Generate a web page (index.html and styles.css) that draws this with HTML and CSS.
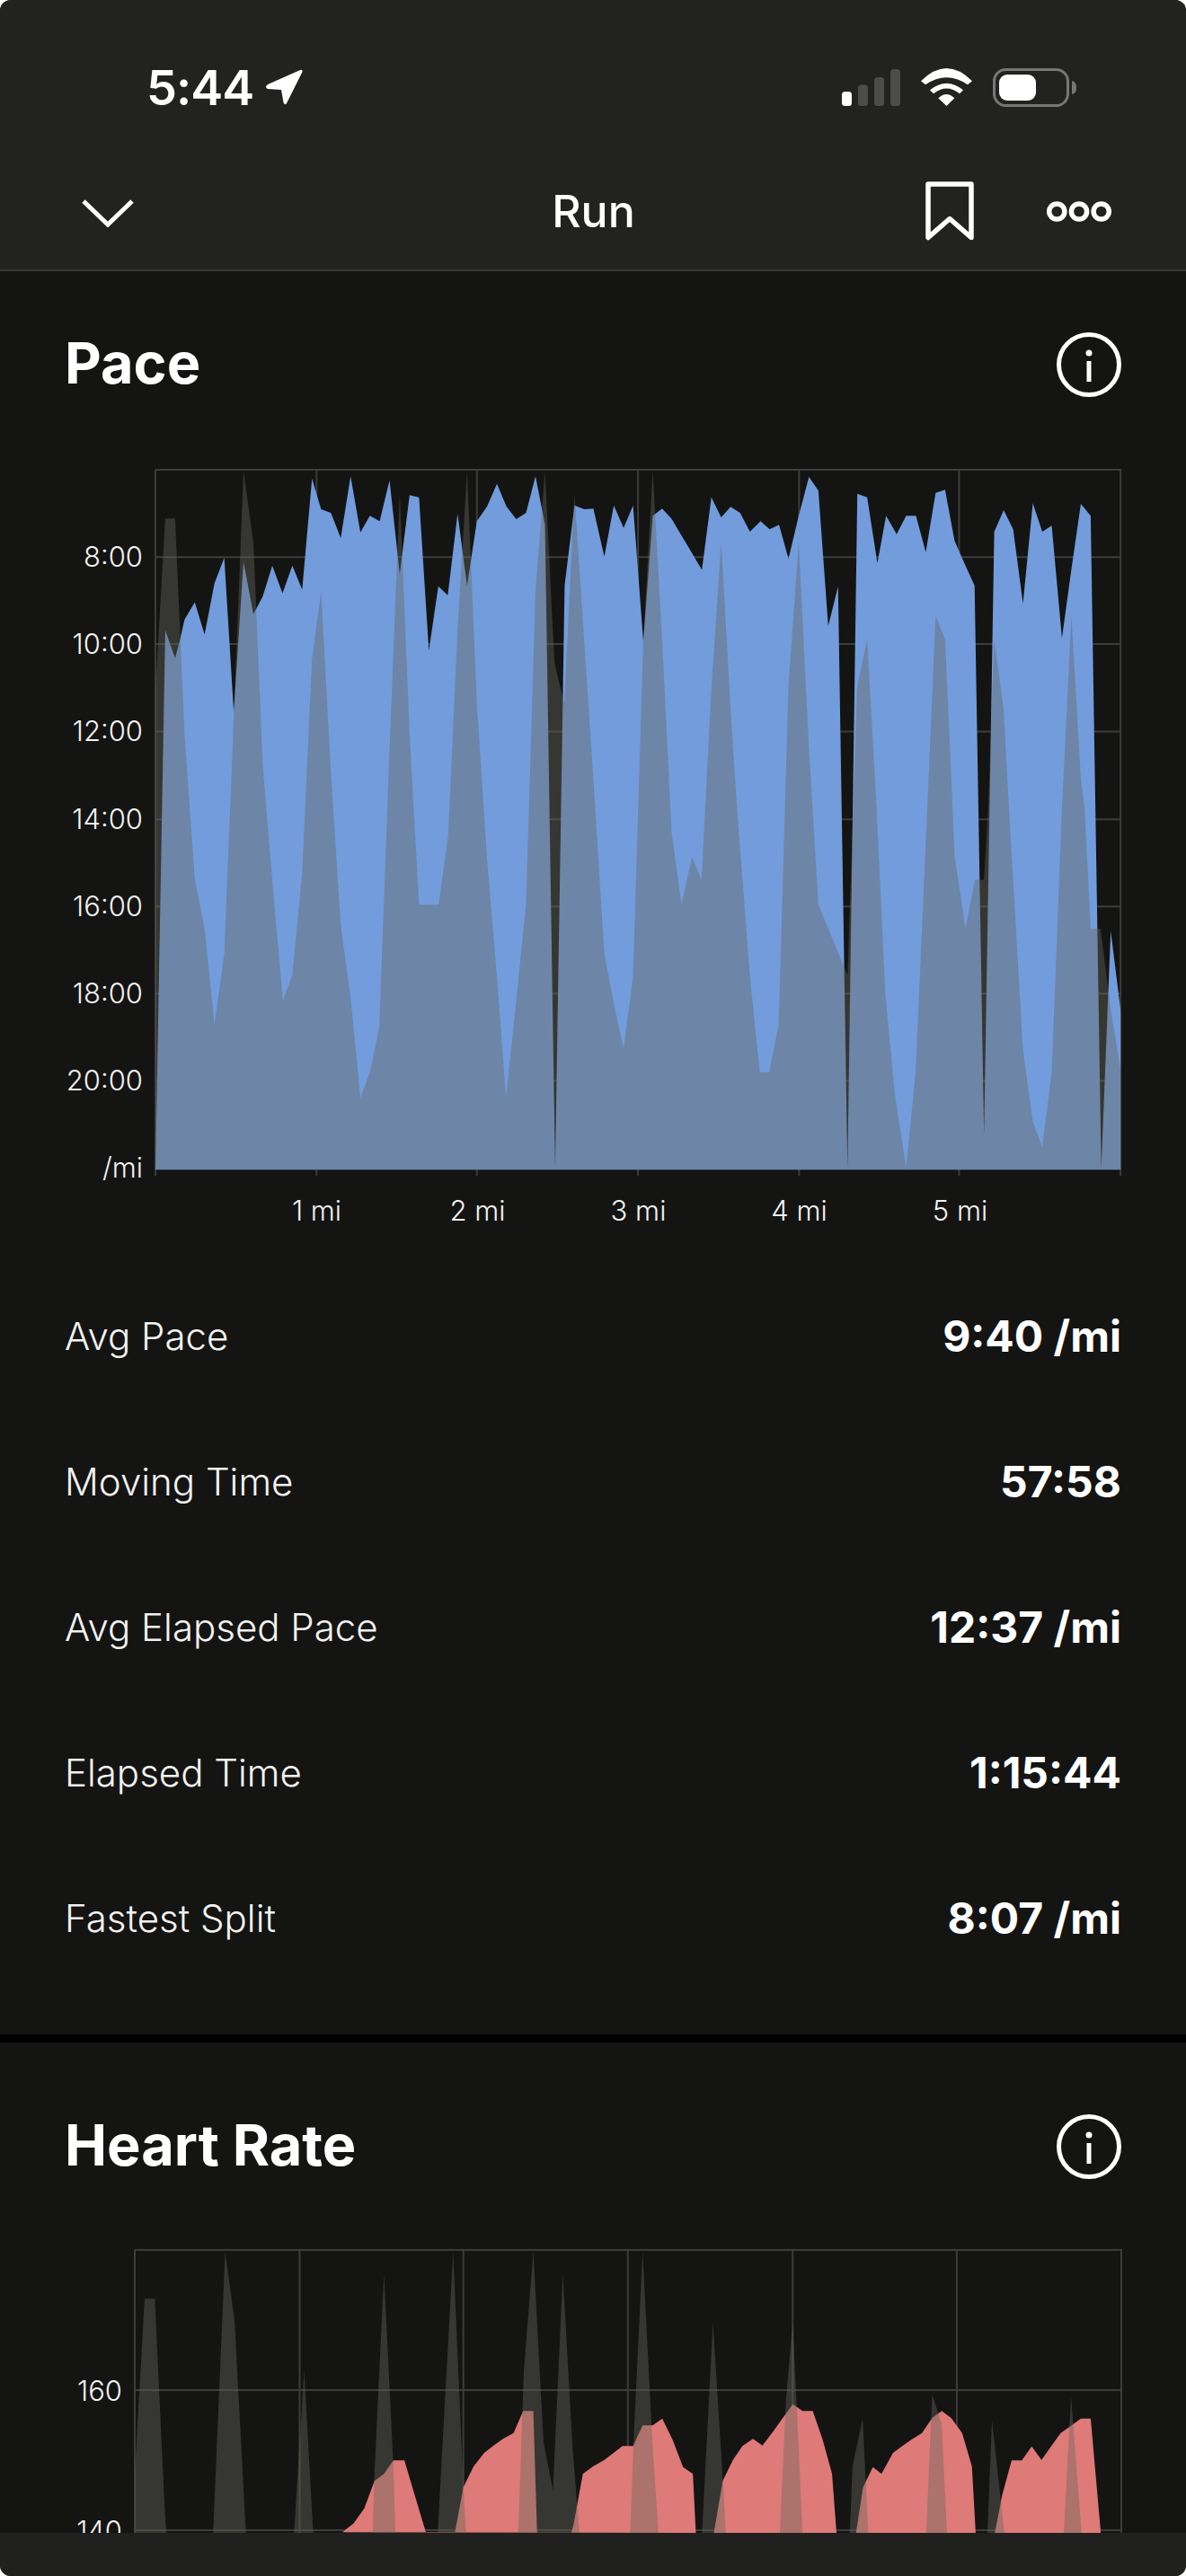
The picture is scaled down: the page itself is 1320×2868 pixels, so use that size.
FILE: index.html
```html
<!DOCTYPE html>
<html>
<head>
    <title>Run</title>
    <link rel="stylesheet" href="styles.css">
</head>
<body>
<div class="screen">
    <header class="top">
        <div class="status">
            <span class="clock">5:44</span>
            <svg class="arrow" viewBox="0 0 42 40"><path d="M39 1 Q42 0 41.500 3 L24 38 Q22 41 20.500 37 L18 23 L3 22 Q-1 20 3 17 Z" fill="#fff"/></svg>
            <span class="grow"></span>
            <svg class="signal" viewBox="0 0 65 41">
                <rect x="0" y="25" width="11" height="16" rx="3.500" fill="#fff"/>
                <rect x="18" y="17.500" width="11" height="23.500" rx="3.500" fill="#4c4c4a"/>
                <rect x="36" y="9" width="11" height="32" rx="3.500" fill="#4c4c4a"/>
                <rect x="54" y="0" width="11" height="41" rx="3.500" fill="#4c4c4a"/>
            </svg>
            <svg class="wifi" viewBox="0 0 57 42">
                <path d="M0 14.300 Q28.500 -14.300 57 14.300 L52 18.300 Q28.500 2.300 5 18.300 Z" fill="#fff"/>
                <path d="M10 24.300 Q28.500 9.100 47 24.300 L43 28.300 Q28.500 16.700 14 28.300 Z" fill="#fff"/>
                <path d="M19.300 33.300 Q28.500 24.700 37.300 33.300 L28.500 42 Z" fill="#fff"/>
            </svg>
            <svg class="battery" viewBox="0 0 93 43">
                <rect x="1.500" y="1.500" width="82" height="40" rx="13" fill="none" stroke="#777" stroke-width="3"/>
                <rect x="7" y="7" width="41" height="29" rx="9" fill="#fff"/>
                <path d="M88 14 C92 15 93 18 93 21.500 C93 25 92 28 88 29 Z" fill="#777"/>
            </svg>
        </div>
        <nav class="nav">
            <svg class="chevron" viewBox="0 0 58 32"><path d="M2 3 L29 29 L56 3" fill="none" stroke="#fff" stroke-width="5"/></svg>
            <div class="nav-title">Run</div>
            <div class="nav-actions">
                <svg class="bookmark" viewBox="0 0 54 66"><path d="M3 3 H51 V62.500 L27 41.500 L3 62.500 Z" fill="none" stroke="#fff" stroke-width="5.500" stroke-linejoin="round"/></svg>
                <svg class="dots" viewBox="0 0 72 23">
                    <circle cx="11.300" cy="11.500" r="8.600" fill="none" stroke="#fff" stroke-width="5.500"/>
                    <circle cx="36" cy="11.500" r="8.600" fill="none" stroke="#fff" stroke-width="5.500"/>
                    <circle cx="60.700" cy="11.500" r="8.600" fill="none" stroke="#fff" stroke-width="5.500"/>
                </svg>
            </div>
        </nav>
    </header>

    <section class="panel pace">
        <div class="panel-head">
            <h2>Pace</h2>
            <svg class="info" viewBox="0 0 72 72">
                <circle cx="36" cy="36" r="33.500" fill="none" stroke="#fff" stroke-width="5"/>
                <rect x="33.500" y="32" width="5" height="23" fill="#fff"/>
                <circle cx="36" cy="23" r="3.500" fill="#fff"/>
            </svg>
        </div>

        <div class="chart-row">
            <div class="y-axis pace-axis">
                <span>8:00</span>
                <span>10:00</span>
                <span>12:00</span>
                <span>14:00</span>
                <span>16:00</span>
                <span>18:00</span>
                <span>20:00</span>
                <span>/mi</span>
            </div>
            <svg class="plot pace-plot" viewBox="413 68 2554 2357" preserveAspectRatio="none">
                <path class="grid" d="M413 68 H2965 V2425 M413 360 H2965 M413 650 H2965 M413 942 H2965 M413 1235 H2965 M413 1526 H2965 M413 1817 H2965 M413 2108 H2965 M413 68 V2425 M839 68 V2425 M1263 68 V2425 M1689 68 V2425 M2115 68 V2425 M2538 68 V2425"/>
                <polygon class="blue" points="413,2405 439,604 465,697 477,640 490,568 517,510 543,618 569,447 595,362 620,875 646,375 672,550 697,490 722,388 749,480 775,388 801,468 827,97 851,200 877,212 903,296 929,90 955,277 980,222 1006,240 1032,103 1059,415 1085,153 1110,160 1136,672 1161,457 1186,487 1212,215 1237,455 1263,240 1290,190 1316,115 1341,190 1367,233 1393,212 1418,90 1443,250 1470,2400 1495,455 1521,187 1547,200 1571,198 1600,358 1625,187 1651,262 1676,187 1703,640 1728,222 1753,198 1778,232 1858,402 1883,160 1909,227 1934,192 1959,212 1985,275 2013,240 2037,267 2062,252 2087,365 2114,222 2141,92 2166,138 2192,590 2218,458 2243,2400 2269,148 2295,160 2322,380 2345,222 2373,283 2398,222 2424,222 2450,343 2476,145 2501,135 2526,305 2552,380 2579,455 2604,2290 2631,275 2656,203 2681,267 2707,515 2733,180 2758,275 2783,255 2810,630 2835,400 2860,182 2886,222 2914,2400 2939,1608 2965,1870 2965,2405"/>
                <polygon class="shade" points="413,2405 413,800 439,231 465,231 490,950 517,1435 543,1600 569,1920 595,1685 620,900 646,73 672,310 697,1060 724,1470 750,1840 775,1755 801,1415 827,700 851,475 877,1080 903,1590 929,1830 955,2165 980,2080 1005,1930 1032,1000 1059,150 1085,950 1110,1520 1162,1520 1187,1290 1212,600 1237,73 1263,850 1290,1370 1316,1760 1340,2165 1367,1840 1393,1520 1418,470 1443,73 1468,710 1494,850 1521,150 1571,1100 1600,1685 1625,1850 1651,2000 1676,1760 1703,640 1728,73 1753,640 1778,1280 1804,1520 1832,1360 1857,1437 1883,800 1909,310 1934,870 1951,1200 1985,1760 2011,2080 2036,2080 2061,1920 2087,790 2114,310 2141,1000 2166,1520 2192,1600 2218,1680 2243,1755 2269,790 2295,635 2320,1200 2343,1820 2369,2160 2398,2400 2423,2080 2454,1200 2476,555 2501,635 2521,1200 2526,1355 2555,1600 2580,1437 2604,1437 2615,1200 2631,635 2656,870 2670,1200 2707,2005 2733,2245 2758,2330 2783,2080 2810,1200 2835,555 2860,1100 2870,1200 2886,1600 2912,1600 2939,1870 2965,2070 2965,2405"/>
            </svg>
        </div>
        <div class="x-axis pace-x">
            <span>1 mi</span>
            <span>2 mi</span>
            <span>3 mi</span>
            <span>4 mi</span>
            <span>5 mi</span>
        </div>

        <dl class="stats">
            <div class="stat"><dt>Avg Pace</dt><dd>9:40 /mi</dd></div>
            <div class="stat"><dt>Moving Time</dt><dd>57:58</dd></div>
            <div class="stat"><dt>Avg Elapsed Pace</dt><dd>12:37 /mi</dd></div>
            <div class="stat"><dt>Elapsed Time</dt><dd>1:15:44</dd></div>
            <div class="stat"><dt>Fastest Split</dt><dd>8:07 /mi</dd></div>
        </dl>
    </section>

    <section class="panel heart">
        <div class="panel-head">
            <h2>Heart Rate</h2>
            <svg class="info" viewBox="0 0 72 72">
                <circle cx="36" cy="36" r="33.500" fill="none" stroke="#fff" stroke-width="5"/>
                <rect x="33.500" y="32" width="5" height="23" fill="#fff"/>
                <circle cx="36" cy="23" r="3.500" fill="#fff"/>
            </svg>
        </div>
        <div class="chart-row hr-row">
            <div class="y-axis hr-axis">
                <span>160</span>
                <span>140</span>
            </div>
            <svg class="plot hr-plot" viewBox="356 137 2609 1023" preserveAspectRatio="none">
                <path class="grid" d="M356 137 H2965 V1160 M356 605 H2965 M356 1073 H2965 M356 137 V1160 M792 137 V1160 M1225 137 V1160 M1660 137 V1160 M2096 137 V1160 M2530 137 V1160"/>
                <polygon class="red" points="905,1080 935,1050 963,1000 990,908 1015,885 1040,840 1069,840 1095,950 1127,1085 1202,1085 1225,930 1252,860 1280,815 1305,790 1330,768 1358,748 1383,675 1410,675 1420,1085 1510,1085 1517,1050 1541,885 1568,860 1598,838 1646,792 1674,792 1699,723 1726,723 1751,700 1778,770 1806,862 1832,885 1840,1085 1887,1085 1911,908 1938,838 1963,792 1991,768 2016,790 2043,745 2096,652 2122,675 2149,675 2175,770 2200,885 2212,1085 2263,1085 2282,930 2308,862 2331,885 2361,815 2386,792 2413,768 2438,748 2465,698 2490,675 2515,698 2544,748 2570,860 2580,1085 2630,1085 2650,955 2675,840 2702,840 2728,793 2754,838 2780,792 2805,748 2832,724 2858,700 2884,700 2911,1085"/>
                <polygon class="shade" points="356,1160 356,880 382,300 409,300 435,1000 440,1085 563,1085 595,143 620,375 650,1085 777,1085 804,540 828,1085 985,1085 990,880 1015,218 1040,860 1045,1085 1157,1085 1198,143 1225,930 1232,1085 1370,1085 1385,540 1410,143 1437,780 1462,940 1488,218 1514,800 1532,1085 1666,1085 1675,780 1699,143 1725,780 1741,1085 1856,1085 1885,380 1910,880 1919,1085 2062,1085 2078,640 2096,380 2108,700 2122,1085 2247,1085 2254,860 2281,700 2296,1085 2449,1085 2465,620 2490,720 2504,1085 2611,1085 2623,705 2656,1085 2813,1085 2832,625 2860,1085 2860,1160"/>
            </svg>
        </div>
    </section>

    <div class="tabbar"></div>
</div>
</body>
</html>
```

FILE: styles.css
```css
html, body {
    margin: 0;
    padding: 0;
    background: #fff;
}
.screen {
    position: relative;
    width: 1320px;
    height: 2868px;
    overflow: hidden;
    border-radius: 12px;
    background: #141413;
    color: #fff;
    font-family: Inter, sans-serif;
}

/* top bar */
.top {
    height: 300px;
    background: #222220;
    border-bottom: 2px solid #383836;
}
.status {
    display: flex;
    align-items: center;
    height: 194px;
    padding: 0 122px 0 163px;
}
.clock {
    font-size: 54px;
    font-weight: 600;
    letter-spacing: -1px;
}
.arrow {
    width: 42px;
    height: 40px;
    margin-left: 13px;
}
.grow {
    flex: 1;
}
.signal {
    width: 65px;
    height: 41px;
    margin-right: 23px;
}
.wifi {
    width: 57px;
    height: 42px;
    margin-right: 23px;
}
.battery {
    width: 93px;
    height: 43px;
}
.nav {
    display: grid;
    grid-template-columns: 1fr auto 1fr;
    align-items: center;
    height: 82px;
    padding: 0 83px 0 91px;
}
.chevron {
    width: 58px;
    height: 32px;
    margin-top: 3px;
}
.nav-title {
    margin-right: 7px;
    font-size: 50px;
    font-weight: 500;
}
.nav-actions {
    display: flex;
    justify-content: flex-end;
    align-items: center;
    gap: 81px;
}
.bookmark {
    width: 54px;
    height: 66px;
}
.dots {
    width: 72px;
    height: 23px;
}

/* panels */
.panel {
    padding: 0 72px;
}
.pace {
    height: 1972px;
    border-bottom: 9px solid #000;
    box-sizing: border-box;
}
.panel-head {
    display: flex;
    justify-content: space-between;
    align-items: center;
    height: 72px;
}
.pace .panel-head {
    padding-top: 68px;
}
.heart .panel-head {
    padding-top: 80px;
}
h2 {
    margin: -4px 0 0;
    font-size: 63px;
    font-weight: 700;
}
.info {
    width: 72px;
    height: 72px;
}

/* charts */
.chart-row {
    display: flex;
    gap: 14px;
}
.pace .chart-row {
    margin-top: 81px;
}
.hr-row {
    margin-top: 79px;
}
.y-axis {
    display: grid;
    font-size: 31px;
    font-weight: 300;
    color: #f2f2f0;
    text-align: right;
}
.y-axis span {
    display: flex;
    align-items: center;
    justify-content: flex-end;
}
.pace-axis {
    width: 88px;
    height: 786px;
    grid-auto-rows: 97.200px;
    padding-top: 48px;
    box-sizing: border-box;
}
.hr-axis {
    width: 64px;
    grid-auto-rows: 156px;
    padding-top: 78px;
}
.plot {
    flex: none;
    overflow: visible;
}
.pace-plot {
    width: 1075px;
    height: 786px;
}
.hr-plot {
    width: 1098px;
    height: 341px;
}
.grid {
    fill: none;
    stroke: #3c3c3a;
    stroke-width: 2;
    vector-effect: non-scaling-stroke;
}
.blue {
    fill: #729cdc;
}
.red {
    fill: #de7a78;
}
.shade {
    fill: rgba(102, 102, 92, 0.42);
}
.x-axis {
    display: flex;
    height: 41px;
    margin: 18px 0 0 191px;
    font-size: 31px;
    font-weight: 300;
    line-height: 41px;
    color: #f2f2f0;
}
.x-axis span {
    width: 179px;
    text-align: center;
}

/* stats under the chart */
.stats {
    margin: 38px 0 0;
}
.stat {
    display: flex;
    justify-content: space-between;
    align-items: center;
    height: 162px;
}
.stat dt {
    font-size: 42px;
    font-weight: 300;
    color: #f2f2f0;
}
.stat dd {
    margin: 0;
    font-size: 48px;
    font-weight: 700;
}

.tabbar {
    position: absolute;
    left: 0;
    right: 0;
    bottom: 0;
    height: 48px;
    background: #20201e;
}
```
